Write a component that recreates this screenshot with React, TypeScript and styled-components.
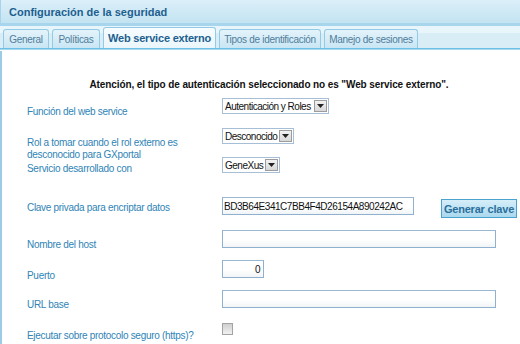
import React from 'react';
import styled, { createGlobalStyle } from 'styled-components';

const GlobalStyle = createGlobalStyle`
  html, body {
    margin: 0;
    padding: 0;
    background: #ffffff;
  }
  body {
    font-family: "Liberation Sans", Arial, sans-serif;
    font-size: 10px;
  }
`;

const Page = styled.div`
  width: 520px;
  height: 344px;
  overflow: hidden;
  display: flex;
  flex-direction: column;
  background: #ffffff;
`;

const TitleBar = styled.div`
  height: 23px;
  display: flex;
  align-items: center;
  padding-left: 8px;
  background: linear-gradient(#dbeff9, #c3e3f2);
  border-left: 1px solid #a9d3ea;
  border-bottom: 3px solid #a7d5ec;
  color: #1d5f8f;
  font-weight: bold;
  font-size: 11px;
  letter-spacing: 0;
`;

const TabStrip = styled.div`
  height: 22px;
  display: flex;
  align-items: flex-end;
  padding-left: 3px;
  gap: 3px;
  background: linear-gradient(#e8f6fc 0, #e8f6fc 7px, #d9edf7 7px);
  border-bottom: 1px solid #6cc0e6;
  box-shadow: 0 1px 0 #a9d8ee;
`;

const Tab = styled.div<{ active?: boolean; w: number }>`
  width: ${p => p.w}px;
  height: ${p => (p.active ? 21 : 19)}px;
  box-sizing: border-box;
  display: flex;
  align-items: center;
  justify-content: center;
  border: 1px solid #93cbe6;
  border-bottom: none;
  border-radius: 3px 3px 0 0;
  background: ${p => (p.active ? 'linear-gradient(#f7fcfe, #eaf6fb)' : 'linear-gradient(#e4f3fa, #c9e6f4)')};
  color: ${p => (p.active ? '#1d5f8f' : '#4f7d9b')};
  font-weight: ${p => (p.active ? 'bold' : 'normal')};
  font-size: ${p => (p.active ? 11 : 10)}px;
  letter-spacing: ${p => (p.active ? -0.2 : -0.3)}px;
  white-space: nowrap;
`;

const Content = styled.div`
  flex: 1;
  border-left: 2px solid #9ccbe6;
  margin-top: 2px;
  padding-top: 28px;
`;

const Notice = styled.div`
  text-align: center;
  padding-left: 16px;
  font-weight: bold;
  font-size: 10px;
  line-height: 12px;
  letter-spacing: -0.1px;
  color: #111111;
  margin-bottom: 7px;
`;

const Form = styled.div`
  display: flex;
  flex-direction: column;
  padding-left: 25px;
`;

const Row = styled.div<{ h: number }>`
  height: ${p => p.h}px;
  display: flex;
  align-items: flex-start;
`;

const Label = styled.div<{ offset: number }>`
  width: 195px;
  margin-top: ${p => p.offset}px;
  line-height: 12px;
  color: #2f84b6;
  font-size: 10px;
  letter-spacing: -0.3px;
`;

const Control = styled.div`
  display: flex;
  align-items: flex-start;
`;

const SelectBox = styled.div<{ w: number }>`
  min-width: ${p => p.w}px;
  height: 16px;
  box-sizing: border-box;
  display: flex;
  align-items: center;
  border: 1px solid #a6bfd6;
  background: #ffffff;
  padding: 1px;
`;

const SelectText = styled.div`
  flex: 1;
  padding-left: 1px;
  padding-right: 2px;
  font-size: 10px;
  letter-spacing: -0.5px;
  color: #111111;
  white-space: nowrap;
`;

const DropButton = styled.div`
  width: 13px;
  height: 12px;
  flex-shrink: 0;
  box-sizing: border-box;
  display: flex;
  align-items: center;
  justify-content: center;
  border: 1px solid #9c9c9c;
  background: linear-gradient(#f2f2f2, #d8d8d8);
`;

const TextInput = styled.div<{ w: number; right?: boolean }>`
  width: ${p => p.w}px;
  height: 18px;
  box-sizing: border-box;
  display: flex;
  align-items: center;
  justify-content: ${p => (p.right ? 'flex-end' : 'flex-start')};
  padding: 0 3px 0 1px;
  border: 1px solid #8fb0cf;
  border-top-color: #9ab8d4;
  background: linear-gradient(#ffffff 55%, #f1f4f6);
  color: #111111;
  font-size: 10px;
  letter-spacing: -0.45px;
  white-space: nowrap;
  overflow: hidden;
`;

const GenerateButton = styled.div`
  margin-left: 27px;
  margin-top: 2px;
  width: 76px;
  height: 19px;
  box-sizing: border-box;
  display: flex;
  align-items: center;
  justify-content: center;
  border: 1px solid #4aa3cf;
  background: linear-gradient(#d6eef9, #a9d8ee);
  color: #2a6f9c;
  font-weight: bold;
  font-size: 11px;
  letter-spacing: -0.2px;
`;

const CheckBox = styled.div`
  width: 11px;
  height: 12px;
  box-sizing: border-box;
  border: 1px solid #a3a3a3;
  background: linear-gradient(#cfcfcf, #f2f2f2);
`;

const Arrow = () => (
  <svg width="7" height="4" viewBox="0 0 7 4">
    <path d="M0 0H7L3.5 4Z" fill="#222" />
  </svg>
);

const Select = ({ w, value }: { w: number; value: string }) => (
  <SelectBox w={w}>
    <SelectText>{value}</SelectText>
    <DropButton>
      <Arrow />
    </DropButton>
  </SelectBox>
);

const tabs = [
  { label: 'General', w: 46 },
  { label: 'Políticas', w: 48 },
  { label: 'Web service externo', w: 113, active: true },
  { label: 'Tipos de identificación', w: 102 },
  { label: 'Manejo de sesiones', w: 94 },
];

export default function App() {
  return (
    <Page>
      <GlobalStyle />
      <TitleBar>Configuración de la seguridad</TitleBar>
      <TabStrip>
        {tabs.map(t => (
          <Tab key={t.label} w={t.w} active={t.active}>
            {t.label}
          </Tab>
        ))}
      </TabStrip>
      <Content>
        <Notice>Atención, el tipo de autenticación seleccionado no es "Web service externo".</Notice>
        <Form>
          <Row h={30}>
            <Label offset={8}>Función del web service</Label>
            <Control>
              <Select w={107} value="Autenticación y Roles" />
            </Control>
          </Row>
          <Row h={29}>
            <Label offset={9}>
              Rol a tomar cuando el rol externo es
              <br />
              desconocido para GXportal
            </Label>
            <Control>
              <Select w={71} value="Desconocido" />
            </Control>
          </Row>
          <Row h={40}>
            <Label offset={6}>Servicio desarrollado con</Label>
            <Control>
              <Select w={56} value="GeneXus" />
            </Control>
          </Row>
          <Row h={33}>
            <Label offset={5}>Clave privada para encriptar datos</Label>
            <Control>
              <TextInput w={192}>BD3B64E341C7BB4F4D26154A890242AC</TextInput>
              <GenerateButton>Generar clave</GenerateButton>
            </Control>
          </Row>
          <Row h={30}>
            <Label offset={9}>Nombre del host</Label>
            <Control>
              <TextInput w={274} />
            </Control>
          </Row>
          <Row h={30}>
            <Label offset={10}>Puerto</Label>
            <Control>
              <TextInput w={42} right>0</TextInput>
            </Control>
          </Row>
          <Row h={33}>
            <Label offset={9}>URL base</Label>
            <Control>
              <TextInput w={274} />
            </Control>
          </Row>
          <Row h={16}>
            <Label offset={7}>Ejecutar sobre protocolo seguro (https)?</Label>
            <Control>
              <CheckBox />
            </Control>
          </Row>
        </Form>
      </Content>
    </Page>
  );
}
